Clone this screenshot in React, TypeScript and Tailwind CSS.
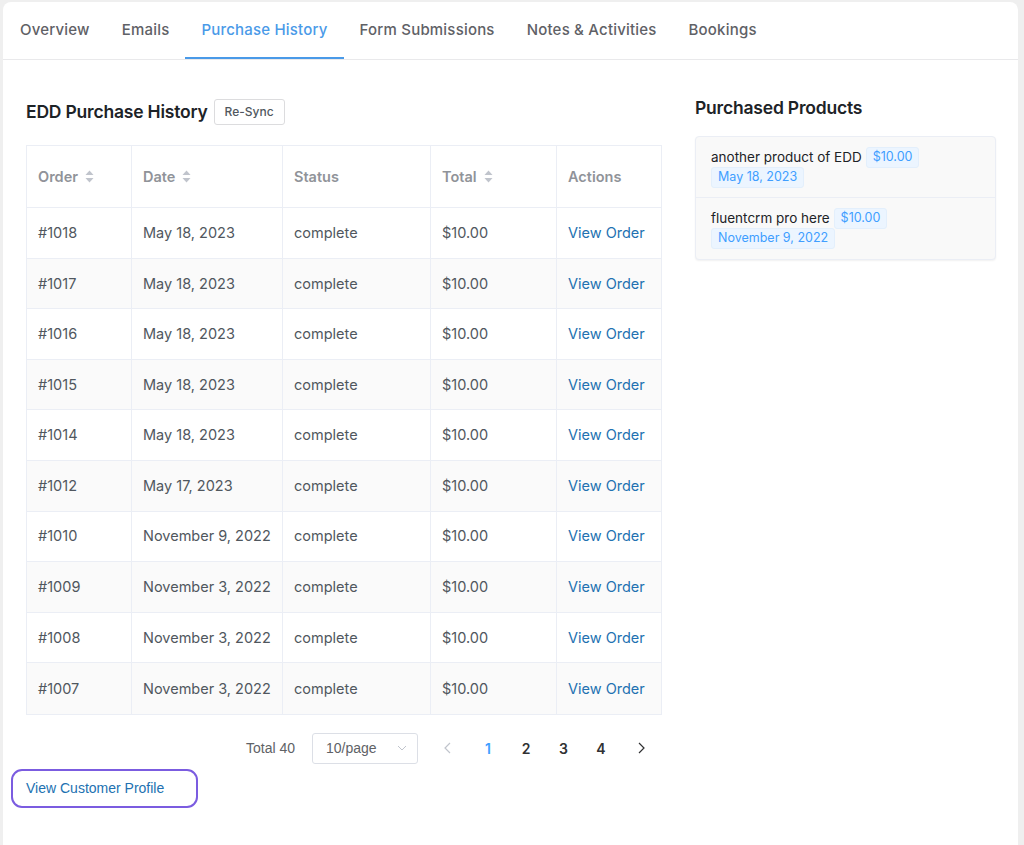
import React from 'react';

const tabs = ['Overview', 'Emails', 'Purchase History', 'Form Submissions', 'Notes & Activities', 'Bookings'];

const orders: { id: string; date: string }[] = [
  { id: '#1018', date: 'May 18, 2023' },
  { id: '#1017', date: 'May 18, 2023' },
  { id: '#1016', date: 'May 18, 2023' },
  { id: '#1015', date: 'May 18, 2023' },
  { id: '#1014', date: 'May 18, 2023' },
  { id: '#1012', date: 'May 17, 2023' },
  { id: '#1010', date: 'November 9, 2022' },
  { id: '#1009', date: 'November 3, 2022' },
  { id: '#1008', date: 'November 3, 2022' },
  { id: '#1007', date: 'November 3, 2022' },
];

const products = [
  { name: 'another product of EDD', price: '$10.00', date: 'May 18, 2023' },
  { name: 'fluentcrm pro here', price: '$10.00', date: 'November 9, 2022' },
];

const cols = ['w-[105px]', 'w-[151px]', 'w-[148px]', 'w-[126px]', 'w-[106px]'];

const SortCaret = () => (
  <svg width="9" height="13" viewBox="0 0 9 13" className="ml-[7px] shrink-0">
    <path d="M4.5 0.5 L8.5 5 L0.5 5 Z" fill="#c0c4cc" />
    <path d="M4.5 12.5 L8.5 8 L0.5 8 Z" fill="#c0c4cc" />
  </svg>
);

const Tag = ({ children }: { children: React.ReactNode }) => (
  <span className="inline-flex h-[21px] items-center whitespace-nowrap rounded-[3px] border border-[#e3effc] bg-[#ecf5ff] px-[6px] text-[12.5px] text-[#409eff]">
    {children}
  </span>
);

export default function App() {
  return (
    <div
      className="min-h-screen bg-[#efefef] pl-[3px] pr-[6px] pt-[2px]"
      style={{ fontFamily: 'Inter, "Noto Sans", sans-serif' }}
    >
      <div className="h-[843px] rounded-t-[8px] bg-white">
        {/* Tabs */}
        <div className="flex h-[58px] border-b border-[#e9e9eb] pl-[1px]">
          {tabs.map((t) => {
            const active = t === 'Purchase History';
            return (
              <div
                key={t}
                className={`flex items-center whitespace-nowrap px-4 text-[15px] font-medium tracking-[0.2px] ${
                  active ? 'border-b-2 border-[#4a9ae8] pt-[2px] text-[#4a9ae8]' : 'text-[#5f6166]'
                }`}
              >
                {t}
              </div>
            );
          })}
        </div>

        {/* Content */}
        <div className="flex pl-[23px]">
          {/* Left column */}
          <div className="w-[636px] shrink-0 pt-[39px]">
            <div className="flex h-[26px] items-center">
              <h2 className="text-[17.5px] font-semibold tracking-[-0.2px] text-[#1d2327]">EDD Purchase History</h2>
              <button className="ml-[6px] flex h-[26px] items-center rounded-[3px] border border-[#dcdcde] bg-white px-[10px] text-[12px] font-medium text-[#50575e]">
                Re-Sync
              </button>
            </div>

            <div className="mt-[20px] border border-[#ebeef5] text-[14.5px]">
              <div className="flex h-[62px] border-b border-[#ebeef5]">
                {['Order', 'Date', 'Status', 'Total', 'Actions'].map((h, i) => (
                  <div
                    key={h}
                    className={`${cols[i]} flex shrink-0 items-center px-[11px] font-semibold text-[#909399] ${
                      i < 4 ? 'border-r border-[#ebeef5]' : ''
                    }`}
                  >
                    {h}
                    {(i === 0 || i === 1 || i === 3) && <SortCaret />}
                  </div>
                ))}
              </div>
              {orders.map((o, r) => (
                <div
                  key={o.id}
                  className={`flex h-[50.6px] whitespace-nowrap ${r < orders.length - 1 ? 'border-b border-[#ebeef5]' : ''} ${
                    r % 2 === 1 ? 'bg-[#fafafa]' : 'bg-white'
                  }`}
                >
                  <div className={`${cols[0]} flex shrink-0 items-center border-r border-[#ebeef5] px-[11px] text-[#50575e]`}>{o.id}</div>
                  <div className={`${cols[1]} flex shrink-0 items-center border-r border-[#ebeef5] px-[11px] text-[#50575e]`}>{o.date}</div>
                  <div className={`${cols[2]} flex shrink-0 items-center border-r border-[#ebeef5] px-[11px] text-[#50575e]`}>complete</div>
                  <div className={`${cols[3]} flex shrink-0 items-center border-r border-[#ebeef5] px-[11px] text-[#50575e]`}>$10.00</div>
                  <div className={`${cols[4]} flex shrink-0 items-center px-[11px] text-[#2271b1]`}>View Order</div>
                </div>
              ))}
            </div>

            {/* Pagination */}
            <div className="mt-[18px] flex h-[31px] items-center justify-end pr-[2px] text-[14px]">
              <span className="mr-[17px] text-[#606266]" style={{ fontFamily: '"Liberation Sans", Arial, sans-serif' }}>
                Total 40
              </span>
              <div className="flex h-[31px] w-[106px] items-center justify-between rounded-[3px] border border-[#dcdfe6] pl-[13px] pr-[10px] text-[14px] text-[#606266]">
                <span style={{ fontFamily: '"Liberation Sans", Arial, sans-serif' }}>10/page</span>
                <svg width="10" height="6" viewBox="0 0 10 6">
                  <path d="M1 1 L5 5 L9 1" fill="none" stroke="#c0c4cc" strokeWidth="1" />
                </svg>
              </div>
              <div className="ml-[10px] flex items-center font-semibold text-[14px]">
                <span className="mr-[3px] flex w-[38px] justify-center">
                  <svg width="7" height="12" viewBox="0 0 7 12">
                    <path d="M6 1 L1 6 L6 11" fill="none" stroke="#c0c4cc" strokeWidth="1.2" />
                  </svg>
                </span>
                <span className="w-[38px] text-center text-[#409eff]">1</span>
                <span className="w-[38px] text-center text-[#303133]">2</span>
                <span className="w-[37px] text-center text-[#303133]">3</span>
                <span className="w-[38px] text-center text-[#303133]">4</span>
                <span className="ml-[2px] flex w-[38px] justify-center">
                  <svg width="7" height="12" viewBox="0 0 7 12">
                    <path d="M1 1 L6 6 L1 11" fill="none" stroke="#303133" strokeWidth="1.2" />
                  </svg>
                </span>
              </div>
            </div>
          </div>

          {/* Right column */}
          <div className="ml-[33px] w-[301px] shrink-0 pt-[36px]">
            <h3 className="h-[24px] text-[17.5px] font-semibold leading-[24px] tracking-[-0.2px] text-[#1d2327]">
              Purchased Products
            </h3>
            <div className="mt-[16px] rounded-[4px] border border-[#ebeef5] bg-[#f9f9f9] shadow-[0_1px_2px_rgba(0,0,0,0.06)]">
              {products.map((p, i) => (
                <div
                  key={p.name}
                  className={`h-[61px] px-[15px] pt-[10px] ${i === 0 ? 'border-b border-[#ebeef5]' : ''}`}
                >
                  <div className="flex h-[20px] items-center gap-[4px] whitespace-nowrap text-[13.5px] text-[#1d2327]">
                    {p.name}
                    <Tag>{p.price}</Tag>
                  </div>
                  <div className="flex h-[21px] items-center">
                    <Tag>{p.date}</Tag>
                  </div>
                </div>
              ))}
            </div>
          </div>
        </div>

        {/* Footer button */}
        <div className="mt-[5px] pl-[8px]">
          <button
            className="flex h-[39px] w-[187px] items-center rounded-[11px] border-2 border-[#7b5ce0] pl-[13px] text-[14px] text-[#2271b1]"
            style={{ fontFamily: '"Liberation Sans", Arial, sans-serif' }}
          >
            View Customer Profile
          </button>
        </div>
      </div>
    </div>
  );
}
